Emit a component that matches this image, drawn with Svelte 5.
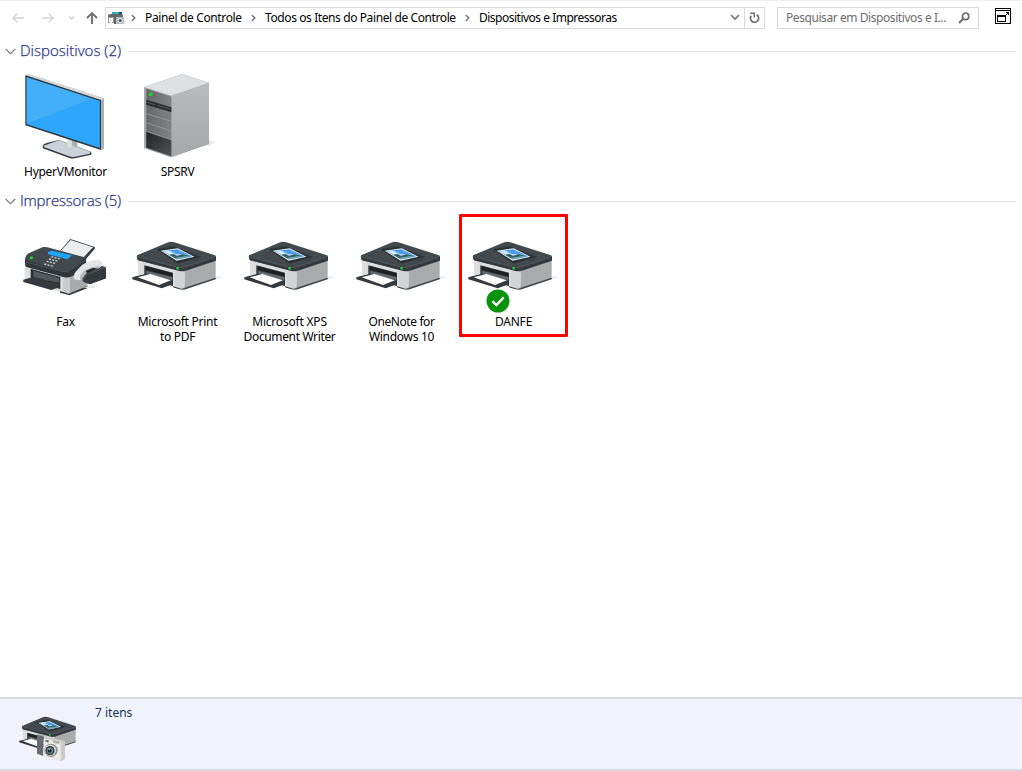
<script>
  const devices = [
    { lines: [['HyperVMonitor', -0.28]], kind: 'monitor' },
    { lines: [['SPSRV', -0.3]], kind: 'server' }
  ];
  const printers = [
    { lines: [['Fax', -0.2]], kind: 'fax' },
    { lines: [['Microsoft Print', -0.25], ['to PDF', -0.3]], kind: 'printer' },
    { lines: [['Microsoft XPS', -0.2], ['Document Writer', -0.36]], kind: 'printer' },
    { lines: [['OneNote for', -0.4], ['Windows 10', -0.3]], kind: 'printer' },
    { lines: [['DANFE', -0.2]], kind: 'printer', selected: true }
  ];
</script>

{#snippet printerArt()}
  <path d="M268 152L295 155L268 166Z" fill="#eeeeee" />
  <path d="M38 104L168 138V194L148 188V180L40 150Z" fill="#dcdddf" />
  <path d="M166 134L272 104V160L176 192L166 193Z" fill="#a9abad" />
  <path d="M150 132H178Q183 160 177 192L168 194L150 186Z" fill="#d3d4d6" />
  <path d="M144 183L168 191Q176 192 184 187L272 158V163L182 193Q170 197 144 187Z" fill="#3c4347" />
  <path d="M58 121L144 143V184L58 154Z" fill="#343a3e" />
  <path d="M62 123L142 145V154L62 135Z" fill="#1d2124" />
  <path d="M64 137L142 157V165L64 146Z" fill="#666c70" />
  <path d="M22 157L60 147L144 169V178L110 190L22 163Z" fill="#34393d" />
  <path d="M38 157L76 147L138 166L102 180Z" fill="#ffffff" />
  <path d="M36 91L130 52Q138 49 148 52L270 91Q274 94 273 98V105L182 136Q171 140 160 136L39 105Q34 102 36 91Z" fill="#434a4e" />
  <path d="M37 96L160 128Q170 131 181 127L273 97V107L182 137Q171 140 160 137L39 106Z" fill="#34393d" />
  <path d="M40 96L160 127Q170 130 181 126L271 96" fill="none" stroke="#596065" stroke-width="2" />
  <path d="M96 73L146 64L228 96L157 116Z" fill="#2c3134" />
  <path d="M107 77L158 70L208 95L155 107Z" fill="#e9f2fa" />
  <path d="M113 79L157 73L201 94L156 103Z" fill="#4b9cea" />
  <path d="M115 79L134 77L154 88L165 87L180 94L156 102Z" fill="#d2e8f9" />
  <path d="M132 89L145 86L156 92L172 88L196 94L156 103Z" fill="#35645f" />
  <path d="M149 99L184 93L200 95L157 103Z" fill="#6da7bd" />
  <circle cx="158" cy="130" r="4" fill="#21d12f" />
{/snippet}

{#snippet art(kind)}
  {#if kind === 'monitor'}
    <svg class="art" viewBox="24 0 288 288">
      <path d="M98 240Q98 235 110 231L146 222L244 258V266L194 277Q186 279 178 276L98 247Z" fill="#33383c" />
      <path d="M101 239L146 223L240 257Q244 260 236 264L191 273Q184 274 177 271L101 243Z" fill="#cbd2d7" />
      <path d="M172 220L202 226V246L188 243L172 244Z" fill="#d9dde0" />
      <path d="M186 224H202V246L186 240Z" fill="#a9b0b5" />
      <path d="M47 28L54 23L282 97V248L272 252Z" fill="#a9b1b6" />
      <path d="M47 27L53 23L282 97L273 103Z" fill="#d4d9dc" />
      <path d="M46 28L273 102V252L46 178Z" fill="#30363b" />
      <path d="M50 34L269 105V245L50 174Z" fill="#259bf4" />
      <path d="M50 34L248 98L50 174Z" fill="#42aff8" />
      <path d="M248 98L269 105V245L50 174Z" fill="#2ea6fb" />
    </svg>
  {:else if kind === 'server'}
    <svg class="art" viewBox="15 0 288 288">
      <defs>
        <linearGradient id="side" x1="0" y1="0" x2="0" y2="1"><stop stop-color="#b9bbbd" /><stop offset="1" stop-color="#a5a7a9" /></linearGradient>
        <linearGradient id="front" x1="0" y1="0" x2="1" y2="0"><stop stop-color="#66686b" /><stop offset="1" stop-color="#808285" /></linearGradient>
        <linearGradient id="base" x1="0" y1="0" x2="1" y2="1"><stop stop-color="#202224" /><stop offset="1" stop-color="#515356" /></linearGradient>
      </defs>
      <path d="M248 222L273 228L248 240Z" fill="#e8e8e8" />
      <path d="M57 63L172 24L252 50V234L137 274L57 246Z" fill="#b0b2b4" />
      <path d="M57 64L172 25L252 51L139 89Z" fill="#dfe0e2" />
      <path d="M139 89L252 50V234L139 274Z" fill="url(#side)" />
      <path d="M58 64L139 90V273L58 246Z" fill="#a3a5a8" />
      <path d="M64 68L139 92V271L64 244Z" fill="url(#front)" />
      <path d="M64 101L139 124V139L64 116Z" fill="#2b2d30" />
      <path d="M68 109L90 116M98 118L134 129" stroke="#55575a" stroke-width="3" />
      <path d="M64 143L139 166M64 170L139 195M64 196L139 221" stroke="#a0a2a4" stroke-width="2" />
      <path d="M64 198L139 223V271L64 245Z" fill="url(#base)" />
      <circle cx="77" cy="85" r="5.5" fill="#13df22" />
    </svg>
  {:else if kind === 'fax'}
    <svg class="art" viewBox="54 84 288 288">
      <path d="M178 191L211 153L284 177Q286 180 283 184L252 220L238 218Z" fill="#343a3e" />
      <path d="M182 189L212 156L279 178L247 212Z" fill="#ecedef" />
      <path d="M74 220L210 258V319L180 312L74 280Z" fill="#dddfe1" />
      <path d="M188 264H212L262 248V296L210 318L188 314Z" fill="#c9cbcd" />
      <path d="M210 266L262 246V296L210 318Z" fill="#a8aaac" />
      <path d="M180 309L206 317L262 294V301L208 322L180 314Z" fill="#363c40" />
      <path d="M92 242L181 267V303L92 280Z" fill="#292e31" />
      <path d="M100 248L178 270V284L100 270Z" fill="#54595d" />
      <path d="M70 275L101 266L178 289V298L154 306L70 282Z" fill="#34393d" />
      <path d="M75 214Q74 204 86 196L122 180Q130 175 142 178L254 208Q263 212 256 220L216 258Q208 268 194 267L78 236Q74 232 75 214Z" fill="#424a4e" />
      <path d="M75 215L190 251Q202 253 212 245L257 209L260 246L216 265Q204 271 190 267L78 236Z" fill="#30363a" />
      <path d="M76 222L190 251Q202 253 212 245L256 216" fill="none" stroke="#4d5458" stroke-width="3" />
      <path d="M144 191L157 188L216 202L203 214L144 199Z" fill="#20a4ff" />
      <path d="M154 206L180 213M147 213L175 220M140 220L168 227M133 228L160 235" stroke="#cfd3d5" stroke-width="4" stroke-dasharray="6 4" />
      <circle cx="94" cy="209" r="4.5" fill="#12e51c" />
      <path d="M250 300L286 288L283 301Z" fill="#e9e9e9" />
      <path d="M246 257L296 230L318 238V271L270 288L248 280Z" fill="#454b4f" />
      <path d="M262 262L318 240V271L270 289L250 282Z" fill="#32383b" />
      <path d="M222 272Q219 261 227 251L246 231Q258 222 274 218L296 216Q309 220 307 232L297 241L274 239L256 259L242 275Q232 279 222 272Z" fill="#e3e4e5" />
      <path d="M240 275Q240 257 253 248L275 237L305 234L297 241L279 240L256 258L246 274Z" fill="#b6b9bb" />
      <path d="M257 249L279 240L287 243L262 256Z" fill="#202426" />
    </svg>
  {:else}
    <svg class="art" viewBox="15 -27 288 288">{@render printerArt()}</svg>
  {/if}
{/snippet}

{#snippet tile(item)}
  <div class="tile" class:selected={item.selected}>
    {@render art(item.kind)}
    {#if item.selected}
      <svg class="badge" viewBox="0 0 24 24">
        <circle cx="12" cy="12" r="11.5" fill="#08930d" />
        <path d="M6.4 12.2L10.4 16L17.7 8.3" fill="none" stroke="#fff" stroke-width="2.4" />
      </svg>
    {/if}
    <div class="label">{#each item.lines as [line, spacing]}<span style:letter-spacing="{spacing}px">{line}</span>{/each}</div>
  </div>
{/snippet}

{#snippet group(title, spacing, items)}
  <section>
    <header>
      <svg width="11" height="7" viewBox="0 0 11 7"><path d="M.6 .8L5.5 5.7L10.4 .8" fill="none" stroke="#777" stroke-width="1.2" /></svg>
      <h2 style:letter-spacing="{spacing}px">{title}</h2>
      <i></i>
    </header>
    <div class="tiles">{#each items as item}{@render tile(item)}{/each}</div>
  </section>
{/snippet}

{#snippet sep()}
  <svg class="sep" width="5" height="8" viewBox="0 0 5 8"><path d="M.8 1L3.8 4L.8 7" fill="none" stroke="#777" stroke-width="1.5" /></svg>
{/snippet}

<div class="window">
  <nav>
    <div class="arrows">
      <svg width="88" height="16" viewBox="0 0 88 16" fill="none">
        <path d="M12 8H.8M5.5 3.5L1 8L5.5 12.5" stroke="#d3d3d3" stroke-width="1.4" />
        <path d="M30 8H41M36.5 3.5L41 8L36.5 12.5" stroke="#d3d3d3" stroke-width="1.4" />
        <path d="M57 6.5L59.5 9L62 6.5" stroke="#d0d0d0" stroke-width="1.3" />
        <path d="M80 14V3M75 8L80 3L85 8" stroke="#6e6e6e" stroke-width="1.9" />
      </svg>
    </div>
    <div class="address">
      <svg class="mini" width="16" height="14" viewBox="0 0 16 14">
        <path d="M4 1H14V4H4Z" fill="#3b9be8" /><path d="M7 1H10V3H7Z" fill="#25c56a" /><path d="M11 1H14V3H11Z" fill="#183fb4" />
        <path d="M0 4L2 3H14L15 5V7H0Z" fill="#65696c" />
        <path d="M0 6H6V12H4V8H2V12H0Z" fill="#9b9da0" /><path d="M1 7H5V11H1Z" fill="#f1f2f3" /><path d="M6 6H8V13H6Z" fill="#5d6266" />
        <path d="M8 6H16V13H8Z" fill="#b9bdc0" /><circle cx="12.2" cy="9.5" r="2.4" fill="#eceeee" /><circle cx="12.2" cy="9.5" r="1.5" fill="#455158" />
      </svg>
      {@render sep()}<span class="c1">Painel de Controle</span>
      {@render sep()}<span class="c2">Todos os Itens do Painel de Controle</span>
      {@render sep()}<span class="c3">Dispositivos e Impressoras</span>
      <svg class="drop" width="10" height="7" viewBox="0 0 10 7"><path d="M1 1L5 5L9 1" fill="none" stroke="#777" stroke-width="1.7" /></svg>
      <div class="refresh">
        <svg width="11" height="12" viewBox="0 0 11 12"><path d="M7.8 2.8A4.1 4.1 0 1 1 2.2 3.8" fill="none" stroke="#6e6e6e" stroke-width="1.7" /><path d="M1.2 1.3H5.3V5.4" fill="none" stroke="#6e6e6e" stroke-width="1.4" /></svg>
      </div>
    </div>
    <div class="search">
      <span>Pesquisar em Dispositivos e I...</span>
      <svg width="12" height="12" viewBox="0 0 12 12"><circle cx="7.6" cy="4.4" r="3.2" fill="none" stroke="#6e6e6e" stroke-width="1.7" /><path d="M5.2 6.8L1 11" stroke="#6e6e6e" stroke-width="2" /></svg>
    </div>
    <svg class="restore" width="16" height="16" viewBox="0 0 16 16" shape-rendering="crispEdges">
      <path fill-rule="evenodd" d="M0 0H16V16H0ZM1 1V2H15V1ZM1 3V15H15V3Z" />
      <path fill-rule="evenodd" d="M2 7H11V14H2ZM3 9V13H10V9Z" />
      <path d="M11 4H14V7H13V5H11ZM12 5H13V6H12ZM11 6H12V7H11Z" />
    </svg>
  </nav>
  <main>
    {@render group('Dispositivos (2)', 0.02, devices)}
    {@render group('Impressoras (5)', -0.22, printers)}
  </main>
  <footer>
    <svg width="64" height="64" viewBox="48 60 192 192">
      <g transform="translate(42 46) scale(.68)">{@render printerArt()}</g>
      <path d="M111 134L130 137V198L111 191Z" fill="#686c6f" />
      <path d="M111 134L118 132L137 136L130 139Z" fill="#aaadaf" />
      <path d="M131 144Q131 138 138 139L155 145L172 147L193 153Q196 155 195 161V208L182 213L131 197Z" fill="#c9cac9" />
      <path d="M131 145L182 159V213L131 197Z" fill="#ecece9" />
      <path d="M136 149L146 151V158L136 155Z" fill="#777b7c" /><path d="M160 152L177 156V162L160 158Z" fill="#a0b28d" />
      <circle cx="153" cy="181" r="20" fill="#8b9091" /><circle cx="151" cy="181" r="17" fill="#e4e6e5" />
      <circle cx="150" cy="182" r="14" fill="#3c4548" /><circle cx="150" cy="182" r="9" fill="#769496" /><circle cx="149" cy="182" r="6" fill="#142d36" />
      <path d="M145 178L151 175L149 181Z" fill="#9be4e8" />
    </svg>
    <span>7 itens</span>
  </footer>
</div>

<style>
  :global(body) { margin: 0; background: #fff; }
  .window { width: 1022px; height: 771px; display: flex; flex-direction: column; box-sizing: border-box; border-top: 1px solid #eee; background: #fff; font: 12px/15px "Noto Sans", sans-serif; color: #000; overflow: hidden; }
  svg { display: block; flex: none; }
  nav { height: 35px; display: flex; align-items: flex-start; padding-top: 6px; box-sizing: border-box; }
  .arrows { width: 105px; padding: 3px 0 0 12px; box-sizing: border-box; }
  .address { width: 660px; height: 22px; box-sizing: border-box; border: 1px solid #d9d9d9; display: flex; align-items: center; padding: 0 0 1px 2px; white-space: nowrap; }
  .sep { margin: 0 9px 0 8px; }
  .mini + .sep { margin-left: 7px; }
  .c1 { width: 98px; } .c2 { width: 192px; } .c3 { width: 138px; }
  .address > .c1 { letter-spacing: -.36px; }
  .address > .c2 { letter-spacing: -.4px; }
  .address > .c3 { letter-spacing: -.5px; }
  .drop { margin-left: auto; margin-right: 4px; }
  .refresh { width: 20px; height: 20px; align-self: flex-start; border-left: 1px solid #d9d9d9; display: flex; align-items: center; justify-content: center; box-sizing: border-box; }
  .search { width: 202px; height: 22px; box-sizing: border-box; border: 1px solid #d9d9d9; margin-left: 12px; display: flex; align-items: center; justify-content: space-between; padding: 0 8px 1px 8px; color: #6d6d6d; white-space: nowrap; }
  .search span { width: 162px; letter-spacing: -.43px; }
  .restore { margin: 1px 0 0 16px; }
  main { flex: 1; }
  section { height: 150px; }
  header { height: 30px; display: flex; align-items: center; padding: 0 6px 0 5px; }
  h2 { width: 102px; margin: -2px 6px 0 4px; font: 300 15px/20px "Open Sans", "Noto Sans", sans-serif; -webkit-text-stroke: .25px #1e3287; color: #1e3287; white-space: nowrap; }
  header i { height: 1px; flex: 1; background: #e2e2e2; }
  .tiles { display: flex; padding-left: 10px; }
  .tile { position: relative; width: 112px; display: flex; flex-direction: column; align-items: center; }
  .art { width: 96px; height: 96px; }
  .label { display: flex; flex-direction: column; align-items: center; padding-top: 2px; margin-left: -1px; white-space: nowrap; }
  .selected::before { content: ''; position: absolute; left: 1px; top: -2px; width: 103px; height: 117px; border: 3px solid red; border-radius: 1px; }
  .badge { position: absolute; left: 28px; top: 73px; width: 24px; height: 24px; }
  footer { height: 74px; box-sizing: border-box; border-top: 2px solid #d4dce8; border-bottom: 2px solid #d5d9e0; background: #f0f3fb; display: flex; padding: 11px 0 0 16px; color: #1c2f5d; }
  footer span { margin: -5px 0 0 15px; }
</style>
